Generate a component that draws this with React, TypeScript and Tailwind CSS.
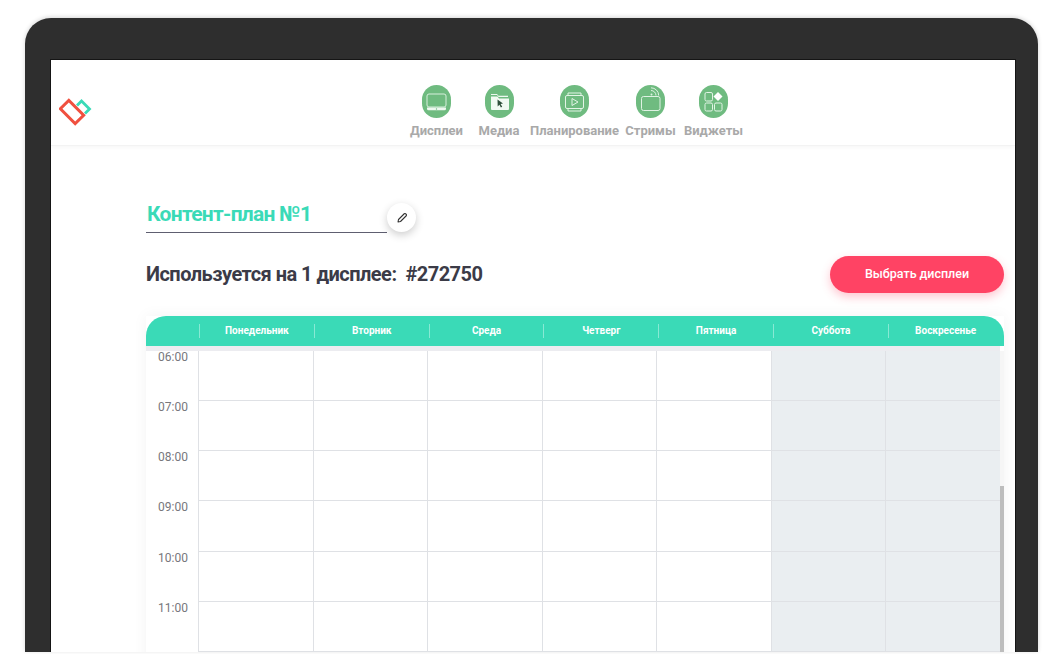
import React from 'react';

const font = { fontFamily: 'Roboto, sans-serif' };

const DisplayIcon = () => (
  <svg viewBox="0 0 29 33" className="w-full h-full">
    <rect x="5" y="9" width="19" height="13" rx="2" fill="#6fbb80" stroke="#d8efdc" strokeWidth="1" />
    <path d="M5 22.500h19v1.200a1.500 1.500 0 0 1-1.500 1.500h-16a1.500 1.500 0 0 1-1.500-1.500z" fill="#eef8f0" />
    <circle cx="14.500" cy="24" r="0.700" fill="#6fbb80" />
  </svg>
);

const MediaIcon = () => (
  <svg viewBox="0 0 29 33" className="w-full h-full">
    <path d="M6 10h6l1.500 2H23v-1.200H13.500L12 9H6z" fill="#eef8f0" />
    <path d="M6 11.500h6.500l1.500 2h10v10.500a1 1 0 0 1-1 1H7a1 1 0 0 1-1-1z" fill="#f2faf3" />
    <path d="M12.500 14.500l5.500 4-2.400.6 1.600 2.600-1.300.7-1.500-2.600-1.700 1.700z" fill="#2f4f3a" />
  </svg>
);

const PlanIcon = () => (
  <svg viewBox="0 0 29 33" className="w-full h-full" fill="none" stroke="#e3f4e6" strokeWidth="1">
    <rect x="5.500" y="10.500" width="18" height="13" rx="1.500" />
    <path d="M8 10.500V8h13v2.500M8 23.500V26h13v-2.500" />
    <path d="M12 13.500l6 3.500-6 3.500z" />
  </svg>
);

const StreamIcon = () => (
  <svg viewBox="0 0 29 33" className="w-full h-full" fill="none" stroke="#dff2e3" strokeWidth="1">
    <rect x="5.500" y="11.500" width="18.500" height="14" rx="2" />
    <path d="M15 5.500a5 5 0 0 1 5 5M15 2.800a7.700 7.700 0 0 1 7.700 7.700" />
    <circle cx="15.500" cy="9.500" r="1" fill="#dff2e3" stroke="none" />
  </svg>
);

const WidgetIcon = () => (
  <svg viewBox="0 0 29 33" className="w-full h-full" fill="none" stroke="#e3f4e6" strokeWidth="1">
    <rect x="6" y="7.500" width="7.500" height="8.500" rx="1.500" />
    <rect x="6" y="18" width="7.500" height="8" rx="1.500" />
    <rect x="15.500" y="18" width="7.500" height="8" rx="1.500" />
    <path d="M19 7l4.500 4.500L19 16l-4.500-4.500z" fill="#ffffff" stroke="none" />
  </svg>
);

const navItems = [
  { label: 'Дисплеи', icon: <DisplayIcon />, cls: 'w-[53px]' },
  { label: 'Медиа', icon: <MediaIcon />, cls: 'w-[42px] ml-[15px]' },
  { label: 'Планирование', icon: <PlanIcon />, cls: 'w-[89px] ml-[10px]' },
  { label: 'Стримы', icon: <StreamIcon />, cls: 'w-[51px] ml-[6px]' },
  { label: 'Виджеты', icon: <WidgetIcon />, cls: 'w-[59px] ml-[8px]' },
];

const days = ['Понедельник', 'Вторник', 'Среда', 'Четверг', 'Пятница', 'Суббота', 'Воскресенье'];
const hours = ['06:00', '07:00', '08:00', '09:00', '10:00', '11:00'];

const Logo = () => (
  <svg viewBox="0 0 33 31" className="w-[33px] h-[31px] shrink-0">
    <path d="M18 8.500l4.500-4.500 8 8-4.500 4.500" fill="none" stroke="#3adab7" strokeWidth="2.800" />
    <rect x="2.500" y="9" width="21" height="12" transform="rotate(45 13 15)" fill="none" stroke="#f0503f" strokeWidth="3" />
  </svg>
);

export default function App() {
  return (
    <div className="w-[1058px] h-[654px] bg-white overflow-hidden pt-[18px] pl-[25px]" style={font}>
      <div className="w-[1013px] h-[634px] bg-[#2e2e2e] rounded-t-[26px] pt-[42px] pl-[26px] pr-[23px] flex shadow-[0_-1px_4px_rgba(0,0,0,0.16)] overflow-hidden">
        <div className="w-[964px] h-full pt-[1px] bg-white shadow-[0_0_0_1px_#151515] overflow-hidden">
          {/* Top nav */}
          <header className="h-[85px] flex items-start border-b border-[#f3f3f3] shadow-[0_2px_4px_rgba(0,0,0,0.03)] relative">
            <div className="absolute left-[8px] top-[36px]">
              <Logo />
            </div>
            <nav className="flex ml-[359px] pt-[24px]">
              {navItems.map((item) => (
                <div key={item.label} className={`flex flex-col items-center ${item.cls}`}>
                  <div className="w-[29px] h-[33px] rounded-full bg-[#6fbb80] shrink-0">{item.icon}</div>
                  <span className="mt-[5px] text-[13px] leading-[16px] font-bold text-[#a9a9a9] whitespace-nowrap">{item.label}</span>
                </div>
              ))}
            </nav>
          </header>

          <main className="pl-[95px] pr-[11px]">
            {/* Plan name */}
            <div className="flex items-start pt-[54px]">
              <div className="w-[241px] h-[33px] border-b-[1.500px] border-[#5e5e70] pl-[1px]">
                <span className="text-[21px] leading-[28px] font-bold tracking-[-0.7px] text-[#3adab7]">Контент-план №1</span>
              </div>
              <button className="w-[29px] h-[29px] mt-[3px] rounded-full bg-white shadow-[0_3px_8px_rgba(0,0,0,0.2)] flex items-center justify-center">
                <svg viewBox="0 0 24 24" className="w-[12px] h-[12px]" fill="none" stroke="#333" strokeWidth="2.200" strokeLinejoin="round">
                  <path d="M4 20l1-5L16.500 3.500a1.800 1.800 0 0 1 2.600 0l1.400 1.400a1.800 1.800 0 0 1 0 2.600L9 19z" />
                </svg>
              </button>
            </div>

            {/* Usage row */}
            <div className="flex items-center justify-between mt-[23px] h-[37px]">
              <span className="text-[20px] font-bold tracking-[-0.52px] text-[#3b3b47] whitespace-pre -mt-[1px]">Используется на 1 дисплее:  #272750</span>
              <button className="w-[174px] h-[37px] rounded-full bg-[#ff4364] text-white text-[12.500px] font-medium shadow-[0_4px_10px_rgba(255,67,100,0.3)]">
                Выбрать дисплеи
              </button>
            </div>

            {/* Calendar */}
            <section className="mt-[23px] w-[858px] shadow-[0_0_14px_rgba(0,0,0,0.05)]">
              <div className="h-[30px] rounded-t-[20px] bg-[#3adab7] grid grid-cols-[53px_repeat(7,114.800px)] items-center">
                <div />
                {days.map((d) => (
                  <div key={d} className="text-center text-[10px] leading-[14px] font-bold text-white border-l border-white/40">
                    {d}
                  </div>
                ))}
              </div>
              <div className="h-[4.500px] bg-[#ececf0] mr-[4px]" />
              <div className="flex">
                <div className="w-[854px]">
                  {hours.map((h) => (
                    <div key={h} className="grid grid-cols-[52px_repeat(7,114.500px)] h-[50.300px]">
                      <div className="text-right pr-[10px] text-[12px] leading-[16px] text-[#77777c] -mt-[2px]">{h}</div>
                      {days.map((d, i) => (
                        <div
                          key={d}
                          className={`border-l border-b border-[#dfe1e5] ${i > 4 ? 'bg-[#eaeef1]' : 'bg-white'}`}
                        />
                      ))}
                    </div>
                  ))}
                </div>
                <div className="w-[4px] bg-[#f6f6f6] pt-[135px]">
                  <div className="h-[200px] bg-[#bdbdbd]" />
                </div>
              </div>
            </section>
          </main>
        </div>
      </div>
    </div>
  );
}
